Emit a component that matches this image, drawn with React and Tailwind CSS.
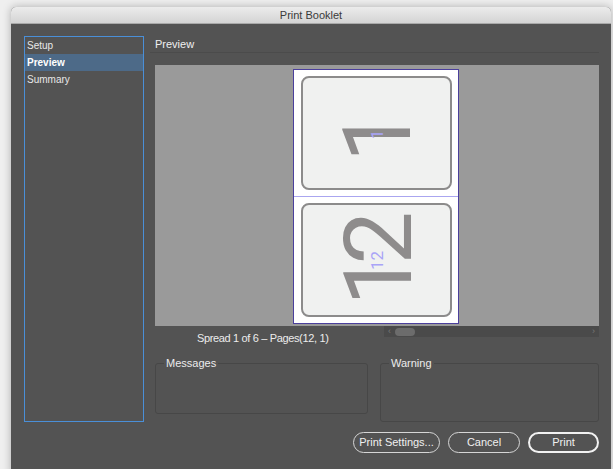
import React from 'react';

const sideItems = ['Setup', 'Preview', 'Summary'];

// One page of the spread: rounded card with a big rotated folio and a small marker
const PageCard = ({ big, small, bigClass, smallClass }) => (
    <div className="relative w-[151px] h-[114px] rounded-[8px] border-2 border-[#8c8b8b] bg-[#f0f1f0] overflow-hidden font-[Roboto,sans-serif]">
        <span className={`absolute -rotate-90 text-[95px] leading-none text-[#8e8c8c] ${bigClass}`}>{big}</span>
        <span className={`absolute -rotate-90 text-[17px] leading-none text-[#a9a4f7] ${smallClass}`}>{small}</span>
    </div>
);

const Btn = ({ children, primary, className = '' }) => (
    <button
        className={`h-[21px] rounded-full text-[11px] text-[#f0f0f0] ${primary ? 'border-2 border-[#f2f2f2]' : 'border border-[#d6d6d6]'} ${className}`}
    >
        {children}
    </button>
);

export default function App() {
    return (
        <div className="w-[613px] h-[469px] overflow-hidden bg-[#efefef] pt-[7px] pl-[11px] font-[Liberation_Sans,Arial,sans-serif]">
            <div className="w-[600px] h-[470px] flex flex-col rounded-t-[5px] overflow-hidden bg-[#535353] shadow-[0_0_9px_rgba(0,0,0,0.28)]">
                {/* title bar */}
                <div className="h-[17px] shrink-0 flex items-center justify-center bg-gradient-to-b from-[#ececec] to-[#d4d4d4] border-b border-[#a9a9a9] text-[11px] text-[#3a3a3a]">
                    Print Booklet
                </div>

                <div className="flex pl-[13px] pt-[12px]">
                    {/* left nav */}
                    <div className="w-[120px] h-[386px] border border-[#4a8fd8]">
                        {sideItems.map((s) => (
                            <div
                                key={s}
                                className={`h-[17px] flex items-center pl-[2px] text-[10px] ${s === 'Preview' ? 'bg-[#4d6a88] text-white font-bold' : 'text-[#e8e8e8]'}`}
                            >
                                {s}
                            </div>
                        ))}
                    </div>

                    {/* main panel */}
                    <div className="ml-[11px] w-[444px] flex flex-col">
                        <div className="h-[17px] flex items-center border-b border-[#4b4b4b] text-[11px] text-[#f0f0f0] -ml-[5px] pl-[5px]">
                            Preview
                        </div>

                        <div className="mt-[12px] h-[261px] bg-[#9a9a9a] flex justify-center pt-[4px] pr-[2px]">
                            <div className="w-[166px] h-[255px] bg-white border border-[#4b3f9c] flex flex-col">
                                <div className="h-[127px] flex items-center justify-center border-b border-[#aaa6f0] pl-[1px]">
                                    <PageCard big="1" small="1" bigClass="left-[48px] top-[10px]" smallClass="left-[70px] top-[48px]" />
                                </div>
                                <div className="flex-1 flex items-center justify-center pl-[1px]">
                                    <PageCard big="12" small="12" bigClass="left-[34px] top-[12px] tracking-[-12px]" smallClass="left-[65px] top-[47px]" />
                                </div>
                            </div>
                        </div>

                        <div className="flex h-[18px]">
                            <div className="w-[229px] pl-[42px] pt-[4px] text-[11px] tracking-[-0.35px] text-[#ececec] whitespace-nowrap">
                                Spread 1 of 6 – Pages(12, 1)
                            </div>
                            <div className="w-[215px] h-[11px] bg-[#4a4a4a] flex items-center px-[4px] text-[9px] leading-none text-[#777]">
                                <span>‹</span>
                                <span className="ml-[4px] w-[20px] h-[8px] rounded-full bg-[#6c6c6c]" />
                                <span className="ml-auto">›</span>
                            </div>
                        </div>

                        <div className="flex items-start mt-[11px]">
                            <fieldset className="w-[213px] h-[59px] border border-[#474747] rounded-[3px] pl-[8px]">
                                <legend className="px-[2px] text-[11px] text-[#ececec]">Messages</legend>
                            </fieldset>
                            <fieldset className="ml-[12px] w-[219px] h-[67px] border border-[#474747] rounded-[3px] pl-[8px]">
                                <legend className="px-[2px] text-[11px] text-[#ececec]">Warning</legend>
                            </fieldset>
                        </div>

                        <div className="flex justify-end gap-[8px] mt-[10px]">
                            <Btn className="w-[87px]">Print Settings...</Btn>
                            <Btn className="w-[72px]">Cancel</Btn>
                            <Btn primary className="w-[71px]">Print</Btn>
                        </div>
                    </div>
                </div>
            </div>
        </div>
    );
}
